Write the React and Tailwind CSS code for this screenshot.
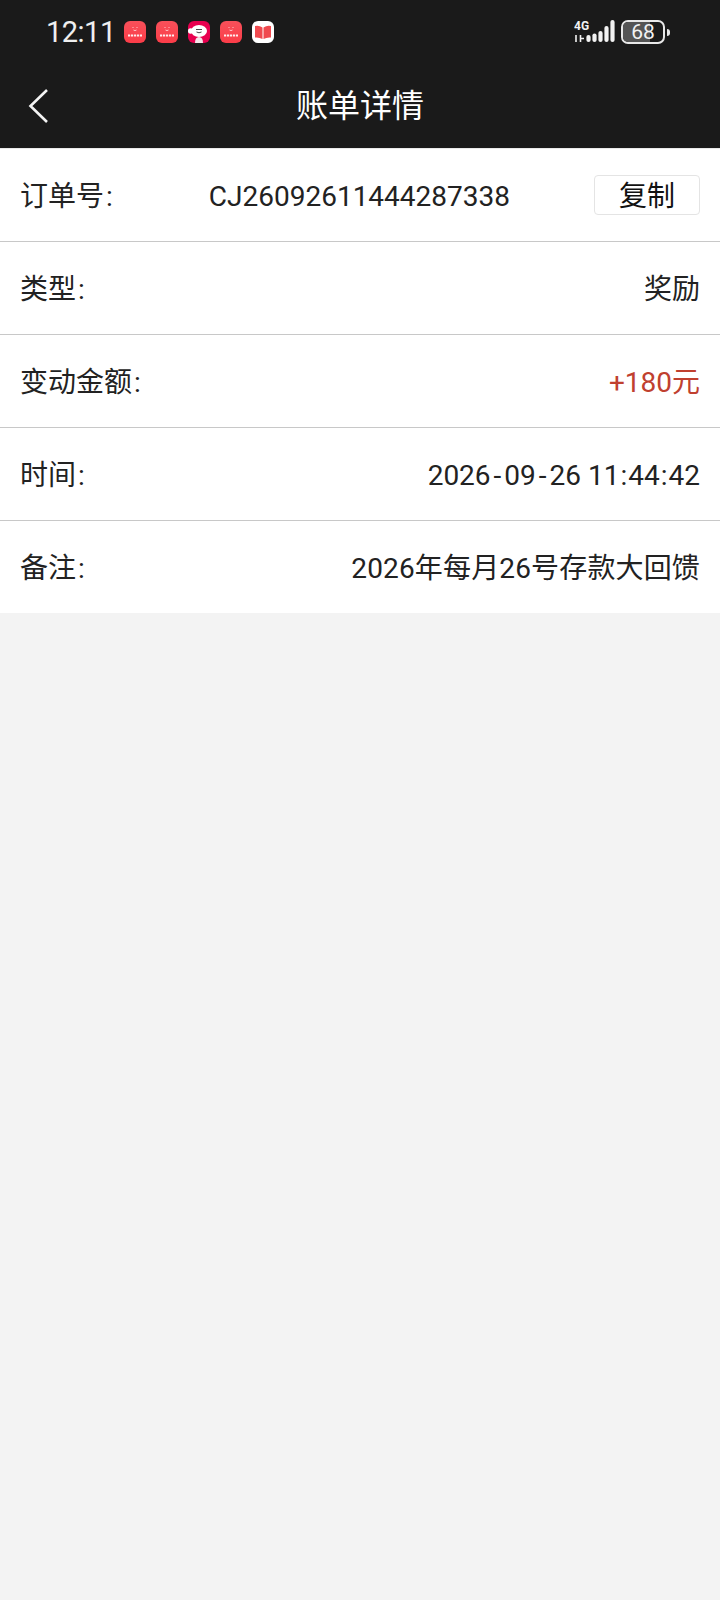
import React from "react";

const font = { fontFamily: '"Roboto", "Noto Sans CJK SC", sans-serif' };

function RedApp() {
  return (
    <div className="w-[22px] h-[22px] rounded-[6px] bg-gradient-to-b from-[#f8505a] to-[#fb3c48] flex items-center justify-center">
      <svg width="20" height="16" viewBox="0 0 20 16">
        <path d="M7.5 3 L8.5 4 M12.5 3 L11.5 4 M8.5 6 Q10 7.2 11.5 6" stroke="#fff" strokeWidth="0.7" fill="none" />
        <path d="M3 11.5 H17" stroke="#fff" strokeWidth="1.8" strokeDasharray="2.2 0.8" fill="none" opacity="0.9" />
      </svg>
    </div>
  );
}

function MascotApp() {
  return (
    <div className="w-[22px] h-[22px] rounded-[6px] bg-[#e8004f] overflow-hidden">
      <svg width="22" height="22" viewBox="0 0 22 22">
        <ellipse cx="11" cy="10" rx="8" ry="6" fill="#fff" />
        <ellipse cx="2.5" cy="10" rx="2.5" ry="2.8" fill="#fff" />
        <path d="M7 22 Q7 16 11 16 Q15 16 15 22 Z" fill="#f3e6ea" />
        <path d="M8 8.5 H14 M8.5 11 Q11 12.5 13.5 11" stroke="#333" strokeWidth="0.9" fill="none" />
      </svg>
    </div>
  );
}

function BookApp() {
  return (
    <div className="w-[22px] h-[22px] rounded-[6px] bg-white flex items-center justify-center">
      <svg width="18" height="16" viewBox="0 0 18 16">
        <path d="M1 2 Q5 1 8.5 3.5 V15 Q5 13 1 13.5 Z" fill="#f04a4f" />
        <path d="M17 2 Q13 1 9.5 3.5 V15 Q13 13 17 13.5 Z" fill="#f04a4f" />
      </svg>
    </div>
  );
}

function StatusRight() {
  return (
    <div className="flex items-center ml-auto">
      <svg width="48" height="26" viewBox="0 0 48 26" fill="none">
        <text x="0" y="11" fill="#f2f2f2" fontSize="12" fontWeight="700" fontFamily="Roboto, sans-serif">4G</text>
        <path d="M2 16 V23 M6.5 16 V23 M7 19.5 H10" stroke="#f2f2f2" strokeWidth="1.6" />
        <g stroke="#f2f2f2" strokeWidth="4.2" strokeLinecap="round">
          <path d="M14.5 18 V21" />
          <path d="M20.5 16.5 V21" />
          <path d="M26.5 14 V21" />
          <path d="M32.5 9 V21" />
          <path d="M38.5 3 V21" />
        </g>
      </svg>
      <div className="relative -ml-[1px] w-[44px] h-[24px] rounded-[7px] border-2 border-[#e8e8e8] overflow-hidden flex items-center justify-center">
        <div className="absolute left-0 top-0 bottom-0 w-[68%] bg-[#555555]" />
        <span className="relative text-[21px] leading-none text-[#f2f2f2]" style={font}>68</span>
      </div>
      <div className="ml-[2px] w-[3px] h-[7px] rounded-r-sm bg-[#e8e8e8]" />
    </div>
  );
}

function Row({ label, children, h = "h-[93px]", last }) {
  return (
    <div className={`${h} flex items-center justify-between px-[20px] pt-[4px] text-[28px] text-[#222222] ${last ? "" : "border-b border-[#c8c8c8]"}`}>
      <span className="shrink-0">
        {label}
        <span className="ml-[2px]">:</span>
      </span>
      {children}
    </div>
  );
}

export default function App() {
  return (
    <div className="w-[720px] h-[1600px] bg-[#f3f3f3] flex flex-col" style={font}>
      <div className="bg-[#1a1a1a] h-[149px] shrink-0 border-b-[1px] border-[#e9e9e9]">
        <div className="h-[64px] flex items-center pl-[46px] pr-[50px]">
          <span className="text-[29px] leading-none text-[#efefef] mr-[8px] tracking-[-0.5px]">12:11</span>
          <div className="flex gap-[10px]">
            <RedApp />
            <RedApp />
            <MascotApp />
            <RedApp />
            <BookApp />
          </div>
          <StatusRight />
        </div>
        <div className="relative h-[84px] flex items-center justify-center">
          <svg width="24" height="36" viewBox="0 0 24 36" className="absolute left-[27px] top-[24px]" fill="none">
            <path d="M20 2 L3.5 18 L20 34" stroke="#f4f4f4" strokeWidth="2.6" />
          </svg>
          <span className="text-[32px] text-white">账单详情</span>
        </div>
      </div>
      <div className="bg-white">
        <Row label="订单号">
          <span className="flex-1 text-center pl-[12px]">CJ26092611444287338</span>
          <button className="w-[106px] h-[40px] -mt-[4px] pt-[3px] rounded-[4px] border border-[#e4e4e4] bg-white text-[28px] leading-none text-[#111111] flex items-center justify-center">
            复制
          </button>
        </Row>
        <Row label="类型"><span>奖励</span></Row>
        <Row label="变动金额"><span className="text-[#c0402f]">+180元</span></Row>
        <Row label="时间">
          <span>
            2026<span className="mx-[3px]">-</span>09<span className="mx-[3px]">-</span>26 11<span className="mx-[1px]">:</span>44<span className="mx-[1px]">:</span>42
          </span>
        </Row>
        <Row label="备注" h="h-[92px]" last><span className="tracking-[0.15px]">2026年每月26号存款大回馈</span></Row>
      </div>
    </div>
  );
}
